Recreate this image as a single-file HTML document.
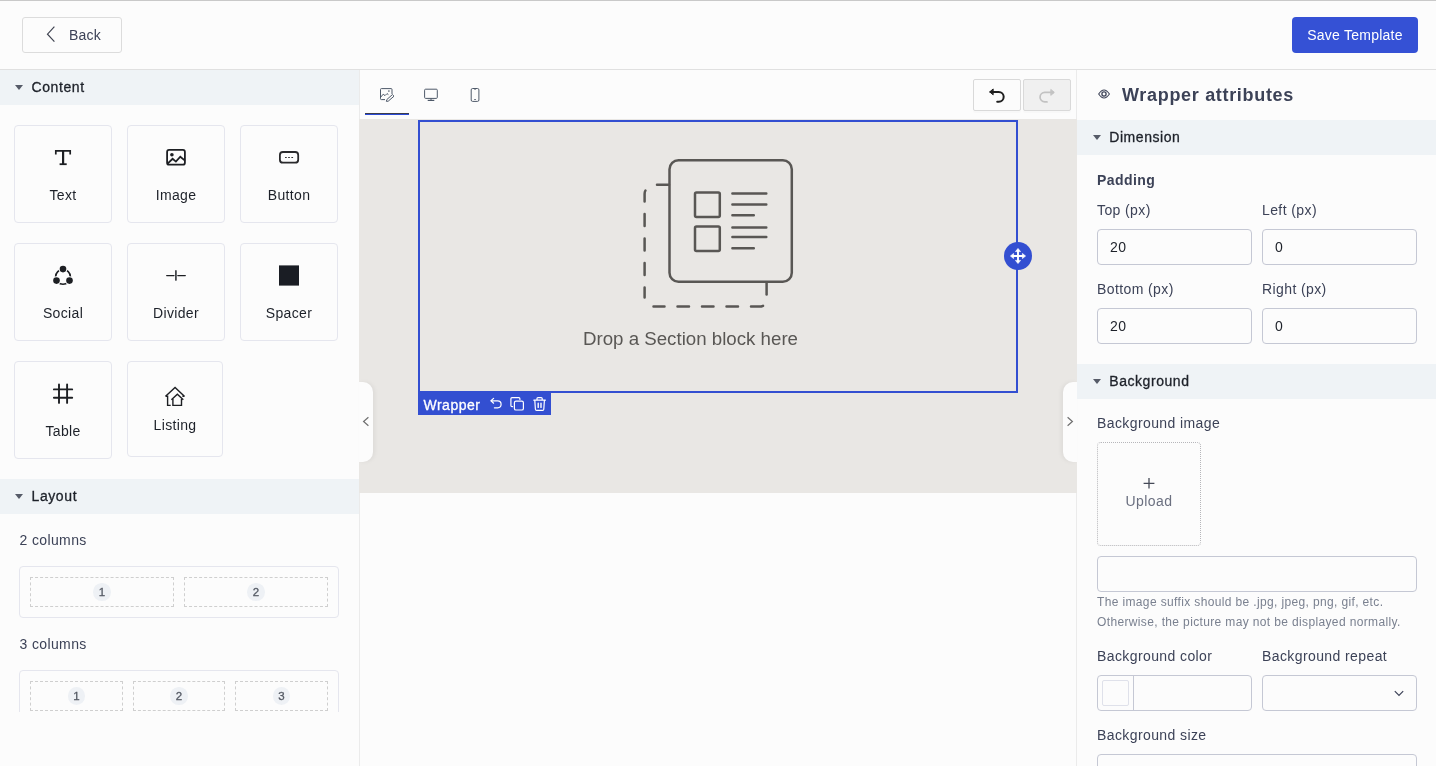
<!DOCTYPE html>
<html lang="en">
<head>
<meta charset="utf-8">
<title>Email template editor</title>
<style>
*{box-sizing:border-box;margin:0;padding:0}
html,body{width:1436px;height:766px;overflow:hidden;background:#fcfcfc}
body{will-change:transform;font-family:"Liberation Sans",sans-serif;font-size:14px;color:#1d2129;position:relative}
.abs{position:absolute}
.topline{left:0;top:0;width:1436px;height:1px;background:#c9c9c9}
.header{left:0;top:1px;width:1436px;height:69px;border-bottom:1px solid #e0e0e0;background:#fcfcfc}
.btn-back{left:22px;top:17px;width:100px;height:36px;border:1px solid #dcdcdc;border-radius:3px;background:#fcfcfc;color:#3c4257}
.btn-back span{position:absolute;left:46px;top:9px;font-size:14px;line-height:16px;letter-spacing:.2px}
.btn-save{left:1292px;top:17px;width:126px;height:36px;border-radius:4px;background:#3551d5;color:#fff;text-align:center;line-height:37.4px;font-size:14px;letter-spacing:.25px}
.left{left:0;top:70px;width:360px;height:696px;border-right:1px solid #ebebeb;background:#fcfcfc}
.sechead{left:0;width:359px;height:35px;background:#eff3f6;font-size:14px;color:#1d2129}
.sechead .tri{position:absolute;left:14.8px;top:14.6px;width:0;height:0;border-left:4.2px solid transparent;border-right:4.2px solid transparent;border-top:5.6px solid #565b68}
.sechead b{position:absolute;left:31.5px;top:9px;line-height:16px;font-weight:normal;letter-spacing:.6px;-webkit-text-stroke:.3px #1d2129}
.card{width:98px;height:98px;border:1px solid #e5e6ee;border-radius:4px;background:#fcfcfc;text-align:center}
.card .lbl{position:absolute;left:0;right:0;top:61px;font-size:14px;line-height:16px;letter-spacing:.35px;color:#1d2129}
.card svg{position:absolute}
.coltitle{left:19.6px;font-size:14px;line-height:16px;letter-spacing:.36px;color:#3c4257}
.colbox{left:19px;width:320px;border:1px solid #e5e6ee;border-radius:4px;background:#fcfcfc}
.dash{position:absolute;top:10px;height:30px;border:1px dashed #cfcfcf}
.dash i{position:absolute;left:50%;top:50%;width:17.4px;height:17.4px;margin:-8.6px 0 0 -8.8px;border-radius:50%;background:#eef1f5;font-style:normal;font-size:11.5px;line-height:18.8px;text-align:center;color:#555a64;-webkit-text-stroke:.3px #555a64}
.center{left:360px;top:70px;width:716px;height:696px;background:#fcfcfc}
.canvas{left:359px;top:119px;width:718px;height:373.5px;background:#e9e7e4}
.tabline{left:365px;top:113px;width:44px;height:2px;background:linear-gradient(#3a3c4c 50%,#2a4bd7 50%)}
.ubtn{top:79px;height:32px;border:1px solid #d9d9d9;border-radius:2px;box-shadow:0 2px 0 rgba(0,0,0,.015)}
.wrap{left:418px;top:120px;width:600px;height:273px;border:2px solid #334fd1}
.wlabel{left:418px;top:393px;width:133px;height:22px;background:#334fd1;color:#fff;font-size:14px;line-height:22px}
.wlabel span{position:absolute;left:5.5px;top:1px;letter-spacing:.5px;-webkit-text-stroke:.3px #fff}
.droptext{left:418px;width:545px;top:328px;text-align:center;font-size:18.7px;line-height:22px;color:#595754}
.handle{left:1004px;top:242px;width:28px;height:28px;border-radius:50%;background:#334fd1}
.coll{top:382px;width:14px;height:80px;background:#fcfcfc}
.right{left:1076px;top:70px;width:360px;height:696px;border-left:1px solid #ebebeb;background:#fcfcfc}
.rtitle{left:1122px;top:84.3px;font-size:18px;line-height:22px;font-weight:bold;color:#3c4257;letter-spacing:.68px}
.rhead{left:1077px;width:359px;height:35px;background:#eff3f6}
.rhead .tri{position:absolute;left:15.9px;top:14.6px;width:0;height:0;border-left:4.2px solid transparent;border-right:4.2px solid transparent;border-top:5.6px solid #565b68}
.rhead b{position:absolute;left:32.3px;top:9px;line-height:16px;font-weight:normal;letter-spacing:.55px;color:#1d2129;-webkit-text-stroke:.3px #1d2129}
.flabel{font-size:14px;line-height:16px;color:#3c4257;letter-spacing:.4px}
.inp{height:36px;border:1px solid #c5c8d4;border-radius:4px;background:#fcfcfc;font-size:14px;color:#1d2129}
.inp span{position:absolute;left:12px;top:9px;line-height:16px;letter-spacing:.4px}
.help{left:1097px;font-size:12px;line-height:14px;color:#7a8190;letter-spacing:.36px}
</style>
</head>
<body>
<div class="abs header"></div>
<div class="abs topline"></div>
<div class="abs btn-back">
  <svg class="abs" style="left:20px;top:7px" width="14" height="19" viewBox="0 0 14 19"><path d="M11.4 1.7 L4.5 9.15 L11.4 16.6" fill="none" stroke="#3f4350" stroke-width="1.2"/></svg>
  <span>Back</span>
</div>
<div class="abs btn-save">Save Template</div>

<!-- LEFT PANEL -->
<div class="abs left"></div>
<div class="abs right"></div>
<div class="abs sechead" style="top:70px"><div class="tri"></div><b>Content</b></div>
<div class="abs card" id="c-text" style="left:14px;top:125px;width:98px;height:98px"><svg class="abs" style="left:-1px;top:-1px" width="98" height="98" viewBox="14 125 98 98"><path d="M55.8 154.6 V150.9 H70.2 V154.6" fill="none" stroke="#1d1f23" stroke-width="1.7" stroke-linejoin="miter"/><path d="M63.1 151 V164" stroke="#1d1f23" stroke-width="2.2"/><path d="M59.6 164.2 H66.7" stroke="#1d1f23" stroke-width="1.8"/></svg><div class="lbl" style="top:61px">Text</div></div>
<div class="abs card" id="c-image" style="left:127px;top:125px;width:98px;height:98px"><svg class="abs" style="left:-1px;top:-1px" width="98" height="98" viewBox="127 125 98 98"><rect x="167.1" y="149.9" width="17.8" height="14.8" rx="2" fill="none" stroke="#1d1f23" stroke-width="1.8"/><circle cx="171.9" cy="154.8" r="1.8" fill="#1d1f23"/><path d="M167.6 163.6 L172.6 158.8 L175.9 161.6 L180.3 156.7 L185 160.6" fill="none" stroke="#1d1f23" stroke-width="1.8" stroke-linejoin="miter"/></svg><div class="lbl" style="top:61px">Image</div></div>
<div class="abs card" id="c-button" style="left:240px;top:125px;width:98px;height:98px"><svg class="abs" style="left:-1px;top:-1px" width="98" height="98" viewBox="240 125 98 98"><rect x="279.9" y="152" width="18.3" height="10.7" rx="3" fill="none" stroke="#2a2a2c" stroke-width="1.8"/><rect x="285" y="156.9" width="1.8" height="1.2" rx=".4" fill="#2a2a2c"/><rect x="288.1" y="156.9" width="1.8" height="1.2" rx=".4" fill="#2a2a2c"/><rect x="291.3" y="156.9" width="1.8" height="1.2" rx=".4" fill="#2a2a2c"/></svg><div class="lbl" style="top:61px">Button</div></div>
<div class="abs card" id="c-social" style="left:14px;top:243px;width:98px;height:98px"><svg class="abs" style="left:-1px;top:-1px" width="98" height="98" viewBox="14 243 98 98"><circle cx="63" cy="276.9" r="7.4" fill="none" stroke="#1d1f23" stroke-width="1.6"/><path d="M63 276.9 L63 262 L74 266 Z" fill="none"/><circle cx="63" cy="269.1" r="4.4" fill="#fcfcfc"/><circle cx="56.5" cy="280.6" r="4.4" fill="#fcfcfc"/><circle cx="69.5" cy="280.6" r="4.4" fill="#fcfcfc"/><circle cx="63" cy="269.1" r="3.3" fill="#1d1f23"/><circle cx="56.5" cy="280.6" r="3.3" fill="#1d1f23"/><circle cx="69.5" cy="280.6" r="3.3" fill="#1d1f23"/></svg><div class="lbl" style="top:61px">Social</div></div>
<div class="abs card" id="c-divider" style="left:127px;top:243px;width:98px;height:98px"><svg class="abs" style="left:-1px;top:-1px" width="98" height="98" viewBox="127 243 98 98"><path d="M166.7 275.55 H174 M177.8 275.55 H185.3" stroke="#1d1f23" stroke-width="1.3" stroke-linecap="round"/><path d="M175.9 270.9 V280" stroke="#3a3d42" stroke-width="1.7" stroke-linecap="round"/></svg><div class="lbl" style="top:61px">Divider</div></div>
<div class="abs card" id="c-spacer" style="left:240px;top:243px;width:98px;height:98px"><svg class="abs" style="left:-1px;top:-1px" width="98" height="98" viewBox="240 243 98 98"><rect x="279" y="265.4" width="20" height="20.2" fill="#1a1d24"/></svg><div class="lbl" style="top:61px">Spacer</div></div>
<div class="abs card" id="c-table" style="left:14px;top:361px;width:98px;height:98px"><svg class="abs" style="left:-1px;top:-1px" width="98" height="98" viewBox="14 361 98 98"><path d="M59 384.4 V402.9 M67.1 384.4 V402.9 M53.9 389.4 H72.2 M53.9 397.7 H72.2" stroke="#1d1f23" stroke-width="1.9" stroke-linecap="round" fill="none"/></svg><div class="lbl" style="top:61px">Table</div></div>
<div class="abs card" id="c-listing" style="left:127px;top:361px;width:96px;height:96px"><svg class="abs" style="left:-1px;top:-1px" width="96" height="96" viewBox="127 361 96 96"><path d="M165.6 396.3 L175.05 387.5 L184.4 396.3 L182.4 396.3" fill="none" stroke="#1d1f23" stroke-width="1.4" stroke-linejoin="miter" stroke-miterlimit="2.5"/><path d="M165.6 396.3 H167.6 V405.4 H170.7" fill="none" stroke="#1d1f23" stroke-width="1.4"/><path d="M171.4 399.8 L177.35 394.3 L183.3 399.8" fill="none" stroke="#1d1f23" stroke-width="1.4"/><path d="M172.9 399 V405.4 H181.5 V399" fill="none" stroke="#1d1f23" stroke-width="1.4"/></svg><div class="lbl" style="top:55px">Listing</div></div>
<div class="abs sechead" style="top:479px"><div class="tri"></div><b>Layout</b></div>
<div class="abs coltitle" style="top:532px">2 columns</div>
<div class="abs colbox" style="top:566px;height:52px">
  <div class="dash" style="left:10px;width:144px"><i>1</i></div>
  <div class="dash" style="left:164px;width:144px"><i>2</i></div>
</div>
<div class="abs coltitle" style="top:636px">3 columns</div>
<div class="abs colbox" style="top:670px;height:52px">
  <div class="dash" style="left:10px;width:93px"><i>1</i></div>
  <div class="dash" style="left:113px;width:92px"><i>2</i></div>
  <div class="dash" style="left:215px;width:93px"><i>3</i></div>
</div>
<div class="abs" style="left:0;top:712px;width:359px;height:54px;background:#fcfcfc"></div>

<!-- CENTER -->
<div class="abs canvas"></div>
<div class="abs tabline"></div>
<div class="abs ubtn" style="left:973px;width:48px;background:#fcfcfc"></div>
<div class="abs ubtn" style="left:1023px;width:48px;background:#f0f0f0"></div>
<div class="abs wrap"></div>
<div class="abs droptext">Drop a Section block here</div>
<div class="abs wlabel"><span>Wrapper</span></div>
<div class="abs handle"></div>
<div class="abs coll" style="left:359px;border-radius:0 10px 10px 0;box-shadow:2px 0 4px rgba(0,0,0,.05)"></div>
<div class="abs coll" style="left:1063px;border-radius:10px 0 0 10px;box-shadow:-2px 0 4px rgba(0,0,0,.05)"></div>

<!-- RIGHT PANEL -->
<div class="abs rtitle">Wrapper attributes</div>
<div class="abs rhead" style="top:120px"><div class="tri"></div><b>Dimension</b></div>
<div class="abs flabel" style="left:1097px;top:172px;font-weight:bold;letter-spacing:.45px">Padding</div>
<div class="abs flabel" style="left:1097px;top:202px">Top (px)</div>
<div class="abs flabel" style="left:1262px;top:202px">Left (px)</div>
<div class="abs inp" style="left:1097px;top:229px;width:155px"><span>20</span></div>
<div class="abs inp" style="left:1262px;top:229px;width:155px"><span>0</span></div>
<div class="abs flabel" style="left:1097px;top:281px">Bottom (px)</div>
<div class="abs flabel" style="left:1262px;top:281px">Right (px)</div>
<div class="abs inp" style="left:1097px;top:308px;width:155px"><span>20</span></div>
<div class="abs inp" style="left:1262px;top:308px;width:155px"><span>0</span></div>
<div class="abs rhead" style="top:364px"><div class="tri"></div><b>Background</b></div>
<div class="abs flabel" style="left:1097px;top:415px">Background image</div>
<div class="abs" style="left:1097px;top:442px;width:104px;height:104px;border:1px dotted #b6b6ba;border-radius:4px"></div>
<div class="abs" style="left:1097px;top:493.3px;width:104px;text-align:center;font-size:14px;line-height:16px;color:#6b7080;letter-spacing:.45px">Upload</div>
<div class="abs inp" style="left:1097px;top:556px;width:320px"></div>
<div class="abs help" style="top:595px">The image suffix should be .jpg, jpeg, png, gif, etc.</div>
<div class="abs help" style="top:615px">Otherwise, the picture may not be displayed normally.</div>
<div class="abs flabel" style="left:1097px;top:648px">Background color</div>
<div class="abs flabel" style="left:1262px;top:648px">Background repeat</div>
<div class="abs inp" style="left:1097px;top:675px;width:155px"><div class="abs" style="left:35px;top:0;width:1px;height:34px;background:#c5c8d4"></div><div class="abs" style="left:4px;top:4px;width:27px;height:26px;border:1px solid #dfe1ea;border-radius:2px"></div></div>
<div class="abs inp" style="left:1262px;top:675px;width:155px"></div>
<div class="abs flabel" style="left:1097px;top:727px">Background size</div>
<div class="abs inp" style="left:1097px;top:754px;width:320px"></div>

<svg class="abs" style="left:0;top:0;pointer-events:none" width="1436" height="766" viewBox="0 0 1436 766">
<!-- toolbar icons -->
<g fill="none" stroke="#4e5969" stroke-width="1">
 <path d="M392 94 V89.5 Q392 88.6 391.1 88.6 H381.4 Q380.5 88.6 380.5 89.5 V98.7 Q380.5 99.6 381.4 99.6 H385"/>
 <path d="M380.8 97 L383.2 94.2 L385 95.6 L387 93.6 L388.4 94.6"/>
 <circle cx="388.9" cy="91.1" r=".8" fill="#4e5969" stroke="none"/>
 <path d="M392.4 94.6 L394 96.2 L388.2 101.2 L386.4 101.4 L386.8 99.6 Z"/>
 <rect x="424.6" y="89.2" width="12.7" height="9.2" rx="1"/>
 <path d="M427.7 100.4 H434.3" stroke-width="1.2"/><path d="M431 98.4 V100.4"/>
 <rect x="471.2" y="88.5" width="7.7" height="12.9" rx="1.4"/>
 <path d="M474.3 99.5 H475.8 M474.3 89.2 H475.8" stroke-width="1"/>
</g>
<!-- undo / redo -->
<g fill="none" stroke-width="2" stroke-linecap="round" stroke-linejoin="round">
 <path d="M990.5 91.9 H998.8 A4.9 4.9 0 0 1 998.8 101.7 H997.2" stroke="#1f1f1f"/>
 <path d="M992.9 89.2 L989.7 91.9 L992.9 94.6 Z" fill="#1f1f1f" stroke="#1f1f1f" stroke-width="1"/>
 <path d="M1053 92.4 H1044.8 A4.75 4.75 0 0 0 1044.8 101.9 H1047" stroke="#c2c2c2" stroke-width="1.7"/>
 <path d="M1051.1 89.7 L1054.3 92.4 L1051.1 95.1 Z" fill="#c2c2c2" stroke="#c2c2c2" stroke-width="1"/>
</g>
<!-- illustration -->
<g fill="none" stroke="#595754" stroke-width="2.5" stroke-linecap="round" stroke-linejoin="round">
 <rect x="669.5" y="160.2" width="122.3" height="121.5" rx="9"/>
 <path d="M657 184.8 H669"/>
 <path d="M766.6 283 V294.5"/>
 <path d="M645.4 190.6 Q644.6 191.8 644.6 194 V201.5 M644.6 214 V226 M644.6 238.5 V250.5 M644.6 263 V275 M644.6 287.5 V297.5"/>
 <path d="M653.5 306.6 H664.5 M677.5 306.6 H689 M702 306.6 H713.5 M726.5 306.6 H738 M751 306.6 H759 Q761.5 306.6 763 305.8"/>
 <rect x="695" y="192.6" width="24.8" height="24.4" rx="1.5"/>
 <rect x="695" y="226.4" width="24.8" height="24.6" rx="1.5"/>
 <path d="M732.4 193.4 H766.3 M732.4 204.4 H766.3 M732.4 215.3 H753.8 M732.4 227.6 H766.3 M732.4 237.1 H766.3 M732.4 248.3 H753.8"/>
</g>
<!-- wrapper label icons -->
<g fill="none" stroke="#fff" stroke-width="1.2" stroke-linecap="round" stroke-linejoin="round">
 <path d="M491.2 400.8 H497.6 A3.4 3.4 0 0 1 497.6 407.8 H494.4"/>
 <path d="M493.6 398.4 L491 400.8 L493.6 403.2"/>
 <rect x="514.4" y="401.2" width="9" height="8.8" rx="1.6"/>
 <path d="M512.6 406.6 H512 Q510.9 406.6 510.9 405.5 V398.8 Q510.9 397.7 512 397.7 H518.8 Q519.9 397.7 519.9 398.8 V399.4"/>
 <path d="M533.8 400.2 H545.4 M537 400 V398.6 Q537 397.6 538 397.6 H541.2 Q542.2 397.6 542.2 398.6 V400 M534.8 400.4 L535.4 409.2 Q535.5 410.3 536.6 410.3 H542.6 Q543.7 410.3 543.8 409.2 L544.4 400.4"/>
 <path d="M538.2 403.2 V407.4 M541 403.2 V407.4" stroke-width="1.4"/>
</g>
<!-- move handle -->
<g stroke="#fff" stroke-width="1.9" fill="#fff" stroke-linecap="butt">
 <path d="M1018 250.6 V261.4 M1012.6 256 H1023.4" />
 <path d="M1018 248.4 L1020.6 251.6 H1015.4 Z M1018 263.6 L1020.6 260.4 H1015.4 Z M1010.4 256 L1013.6 253.4 V258.6 Z M1025.6 256 L1022.4 253.4 V258.6 Z" stroke-width=".6"/>
</g>
<!-- collapser chevrons -->
<g fill="none" stroke="#6f6f6f" stroke-width="1.2">
 <path d="M368.4 417.3 L363.6 421.5 L368.4 425.7"/>
 <path d="M1067.6 417.3 L1072.4 421.5 L1067.6 425.7"/>
</g>
<!-- eye -->
<g fill="none" stroke="#3c4257" stroke-width="1.1">
 <path d="M1098.7 94 Q1104 86 1109.4 94 Q1104 102 1098.7 94 Z"/>
 <circle cx="1104" cy="94" r="2.1" stroke-width="1.3"/>
</g>
<!-- upload plus -->
<path d="M1143.6 483.3 H1154.4 M1149 478 V488.6" stroke="#454a57" stroke-width="1.3" fill="none"/>
<!-- select chevron -->
<path d="M1394.8 691.2 L1399 695.4 L1403.2 691.2" stroke="#3c4257" stroke-width="1.2" fill="none"/>
</svg>
</body>
</html>
